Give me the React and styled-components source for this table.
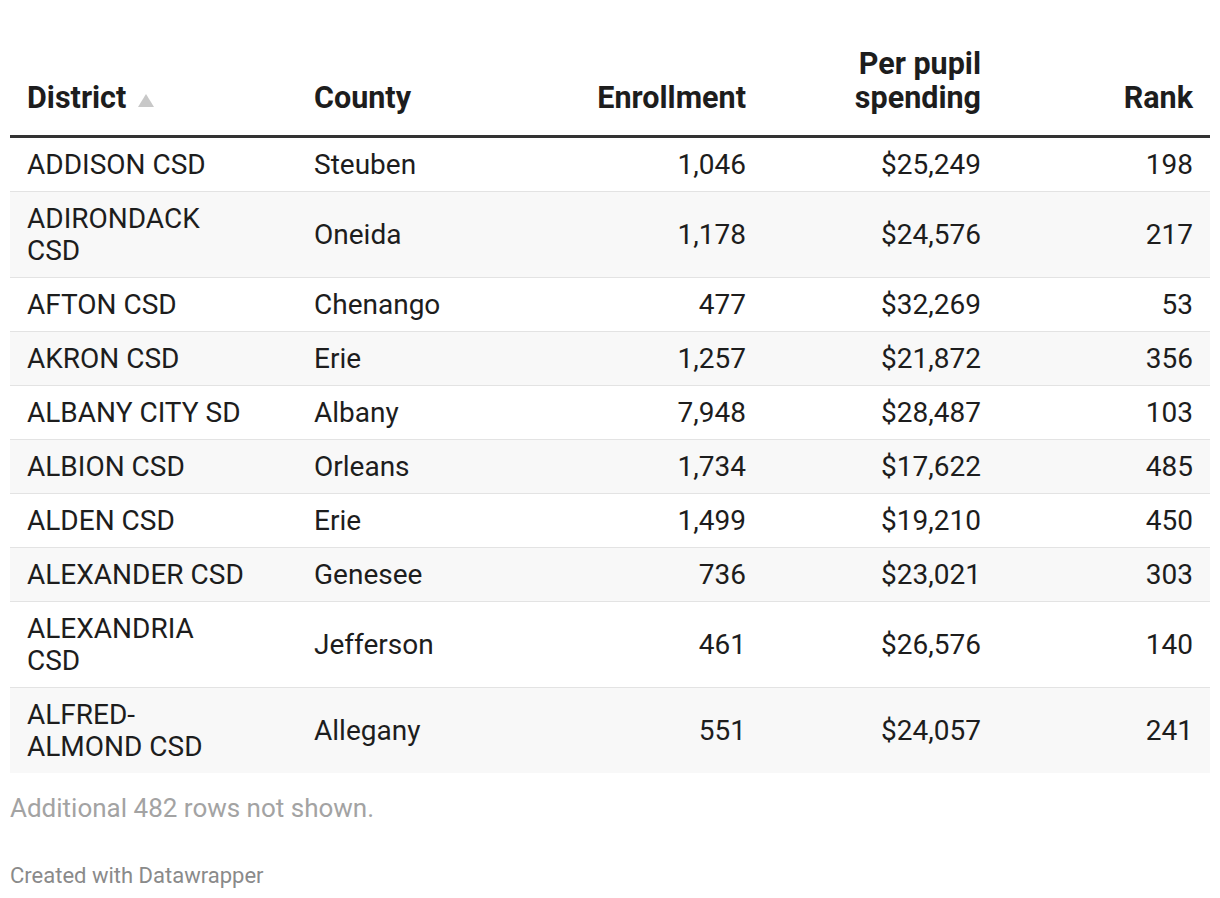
import React from 'react'
import styled, { createGlobalStyle } from 'styled-components'

const GlobalStyle = createGlobalStyle`
    html, body {
        margin: 0;
        padding: 0;
        background: #fff;
    }

    body {
        font-family: Roboto, "Liberation Sans", sans-serif;
        color: #1d1d1d;
    }

    *, *::before, *::after {
        box-sizing: border-box;
    }
`

const Wrap = styled.div`
    padding: 47px 10px 0 10px;
`

const Table = styled.table`
    width: 1200px;
    border-collapse: collapse;
    table-layout: fixed;
`

const HeadCell = styled.th`
    font-weight: 700;
    font-size: 30.5px;
    line-height: 34px;
    color: #1d1d1d;
    text-align: ${p => (p.$num ? 'right' : 'left')};
    vertical-align: bottom;
    padding: 0 17px 20px 17px;
    border-bottom: 3px solid #333;
    width: ${p => p.$w}px;
`

const SortArrow = styled.span`
    display: inline-block;
    margin-left: 12px;
    width: 0;
    height: 0;
    border-left: 8px solid transparent;
    border-right: 8px solid transparent;
    border-bottom: 13px solid #c8c8c8;
    vertical-align: 1px;
`

const Row = styled.tr`
    background: ${p => (p.$odd ? '#f8f8f8' : '#fff')};
    border-bottom: ${p => (p.$last ? 'none' : '1px solid #e3e3e3')};
`

const Cell = styled.td`
    font-size: 28px;
    line-height: 32px;
    color: #1d1d1d;
    text-align: ${p => (p.$num ? 'right' : 'left')};
    padding: 11px ${p => (p.$wrap ? 48 : 17)}px 10px 17px;
    vertical-align: middle;
`

const Notes = styled.div`
    margin-top: 20px;
    font-size: 26px;
    line-height: 30px;
    color: #a3a3a3;
`

const Credit = styled.div`
    margin-top: 40px;
    font-size: 22px;
    line-height: 26px;
    color: #8a8a8a;
`

const rows = [
    ['ADDISON CSD', 'Steuben', '1,046', '$25,249', '198'],
    ['ADIRONDACK CSD', 'Oneida', '1,178', '$24,576', '217'],
    ['AFTON CSD', 'Chenango', '477', '$32,269', '53'],
    ['AKRON CSD', 'Erie', '1,257', '$21,872', '356'],
    ['ALBANY CITY SD', 'Albany', '7,948', '$28,487', '103'],
    ['ALBION CSD', 'Orleans', '1,734', '$17,622', '485'],
    ['ALDEN CSD', 'Erie', '1,499', '$19,210', '450'],
    ['ALEXANDER CSD', 'Genesee', '736', '$23,021', '303'],
    ['ALEXANDRIA CSD', 'Jefferson', '461', '$26,576', '140'],
    ['ALFRED-ALMOND CSD', 'Allegany', '551', '$24,057', '241'],
]

export default function App() {
    return (
        <Wrap>
            <GlobalStyle />
            <Table>
                <thead>
                    <tr>
                        <HeadCell $w={287}>District<SortArrow /></HeadCell>
                        <HeadCell $w={235}>County</HeadCell>
                        <HeadCell $w={231} $num>Enrollment</HeadCell>
                        <HeadCell $w={235} $num>Per pupil<br />spending</HeadCell>
                        <HeadCell $w={212} $num>Rank</HeadCell>
                    </tr>
                </thead>
                <tbody>
                    {rows.map((r, i) => (
                        <Row key={r[0]} $odd={i % 2 === 1} $last={i === rows.length - 1}>
                            <Cell $wrap>{r[0]}</Cell>
                            <Cell>{r[1]}</Cell>
                            <Cell $num>{r[2]}</Cell>
                            <Cell $num>{r[3]}</Cell>
                            <Cell $num>{r[4]}</Cell>
                        </Row>
                    ))}
                </tbody>
            </Table>
            <Notes>Additional 482 rows not shown.</Notes>
            <Credit>Created with Datawrapper</Credit>
        </Wrap>
    )
}
